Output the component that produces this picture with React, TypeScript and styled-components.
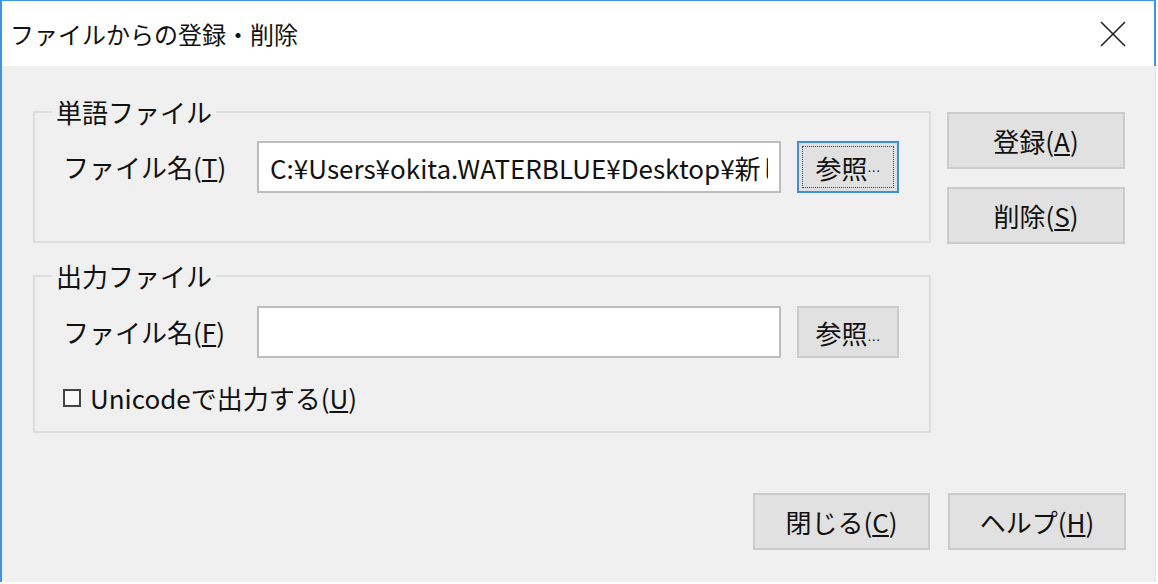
import React from "react";
import styled, { createGlobalStyle } from "styled-components";

const GlobalStyle = createGlobalStyle`
  html, body {
    margin: 0;
    padding: 0;
    background: #ffffff;
  }
  body {
    font-family: "Noto Sans CJK JP", "Noto Sans", sans-serif;
    color: #111;
  }
`;

const Window = styled.div`
  box-sizing: border-box;
  width: 1156px;
  border-left: 2px solid #3a95e4;
  border-top: 1px solid #3a95e4;
  display: flex;
  flex-direction: column;
`;

const TitleBar = styled.div`
  box-sizing: border-box;
  height: 65px;
  background: #ffffff;
  border-right: 2px solid #3a95e4;
  display: flex;
  align-items: center;
  justify-content: space-between;
  padding: 0 28px 0 8px;
`;

const Title = styled.div`
  font-size: 24px;
  line-height: 30px;
  color: #111;
`;

const CloseIcon = styled.svg`
  width: 26px;
  height: 26px;
  display: block;
`;

const Body = styled.div`
  box-sizing: border-box;
  height: 516px;
  background: #f0f0f0;
  border-right: 1px solid #e2e2e2;
  padding: 31px 29px 32px 31px;
  display: flex;
  flex-direction: column;
`;

const TopArea = styled.div`
  display: flex;
  gap: 16px;
`;

const Groups = styled.div`
  width: 898px;
  display: flex;
  flex-direction: column;
  gap: 18px;
`;

const Group = styled.fieldset<{ $padTop: number; $padBottom: number }>`
  margin: 0;
  min-width: 0;
  border: 2px solid #dddddd;
  padding: ${({ $padTop, $padBottom }) => `${$padTop}px 30px ${$padBottom}px 28px`};
  display: flex;
  flex-direction: column;
`;

const Legend = styled.legend`
  font-size: 26px;
  line-height: 30px;
  padding: 0 4px;
  margin-left: -11px;
  color: #111;
`;

const FileRow = styled.div`
  display: flex;
  align-items: center;
  height: 52px;
`;

const Label = styled.label`
  width: 194px;
  font-size: 26px;
  line-height: 30px;
  color: #111;
  white-space: nowrap;
`;

const PathInput = styled.input`
  box-sizing: border-box;
  width: 524px;
  height: 52px;
  border: 2px solid #bdbdbd;
  background: #ffffff;
  padding: 0 11px;
  font-family: "Noto Sans CJK JP", "Noto Sans", sans-serif;
  font-size: 26px;
  color: #111;
  outline: none;
`;

const Button = styled.button<{ $w: number; $h: number; $focused?: boolean }>`
  box-sizing: border-box;
  width: ${({ $w }) => $w}px;
  height: ${({ $h }) => $h}px;
  background: #e1e1e1;
  border: 2px solid ${({ $focused }) => ($focused ? "#3a8fe0" : "#cbcbcb")};
  border-radius: 0;
  padding: 0;
  font-family: "Noto Sans CJK JP", "Noto Sans", sans-serif;
  font-size: 26px;
  color: #111;
  display: flex;
  align-items: center;
  justify-content: center;
  flex-shrink: 0;
`;

const BrowseButton = styled(Button)`
  margin-left: 16px;
`;

const FocusRect = styled.span`
  box-sizing: border-box;
  display: flex;
  align-items: center;
  justify-content: center;
  width: calc(100% - 6px);
  height: calc(100% - 6px);
  border: 1px dotted #444;
`;

const CheckRow = styled.label`
  display: flex;
  align-items: center;
  gap: 9px;
  height: 30px;
  margin-top: 25px;
  font-size: 26px;
  line-height: 30px;
  color: #111;
`;

const CheckBox = styled.span`
  box-sizing: border-box;
  width: 18px;
  height: 18px;
  border: 2px solid #444;
  background: #fafafa;
  display: inline-block;
`;

const SideButtons = styled.div`
  display: flex;
  flex-direction: column;
  gap: 18px;
  padding-top: 15px;
`;

const BottomBar = styled.div`
  margin-top: auto;
  display: flex;
  justify-content: flex-end;
  gap: 18px;
`;

const Dots = styled.span`
  font-family: "Liberation Sans", sans-serif;
  font-size: 14px;
  line-height: 14px;
  letter-spacing: 0.5px;
  align-self: flex-end;
  margin-bottom: 13px;
`;

export default function App() {
  return (
    <>
      <GlobalStyle />
      <Window>
        <TitleBar>
          <Title>ファイルからの登録・削除</Title>
          <CloseIcon viewBox="0 0 26 26">
            <path d="M1 1 L25 25 M25 1 L1 25" stroke="#222" strokeWidth="1.6" fill="none" />
          </CloseIcon>
        </TitleBar>
        <Body>
          <TopArea>
            <Groups>
              <Group $padTop={14} $padBottom={48}>
                <Legend>単語ファイル</Legend>
                <FileRow>
                  <Label htmlFor="wordFile">
                    ファイル名(<u>T</u>)
                  </Label>
                  <PathInput
                    id="wordFile"
                    readOnly
                    value="C:¥Users¥okita.WATERBLUE¥Desktop¥新しいフォルダー¥words.txt"
                  />
                  <BrowseButton $w={102} $h={52} $focused>
                    <FocusRect>
                      参照<Dots>...</Dots>
                    </FocusRect>
                  </BrowseButton>
                </FileRow>
              </Group>
              <Group $padTop={15} $padBottom={18}>
                <Legend>出力ファイル</Legend>
                <FileRow>
                  <Label htmlFor="outFile">
                    ファイル名(<u>F</u>)
                  </Label>
                  <PathInput id="outFile" readOnly value="" />
                  <BrowseButton $w={102} $h={52}>
                    参照<Dots>...</Dots>
                  </BrowseButton>
                </FileRow>
                <CheckRow>
                  <CheckBox />
                  <span>
                    Unicodeで出力する(<u>U</u>)
                  </span>
                </CheckRow>
              </Group>
            </Groups>
            <SideButtons>
              <Button $w={178} $h={57}>
                登録(<u>A</u>)
              </Button>
              <Button $w={178} $h={57}>
                削除(<u>S</u>)
              </Button>
            </SideButtons>
          </TopArea>
          <BottomBar>
            <Button $w={177} $h={57}>
              閉じる(<u>C</u>)
            </Button>
            <Button $w={178} $h={57}>
              ヘルプ(<u>H</u>)
            </Button>
          </BottomBar>
        </Body>
      </Window>
    </>
  );
}
